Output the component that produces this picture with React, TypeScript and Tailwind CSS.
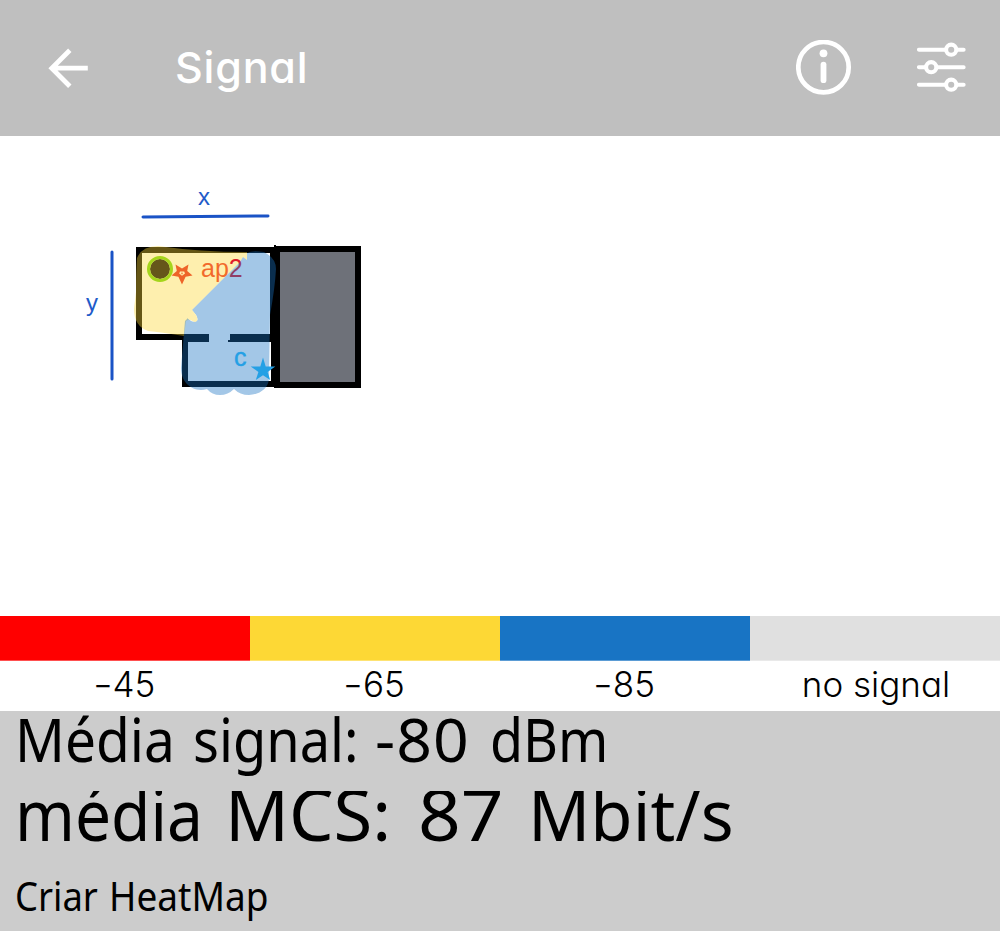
import React from "react";

const legend = [
  { sign: "-", label: "45", color: "bg-[#ff0000]", edge: "border-[#ff5050]" },
  { sign: "-", label: "65", color: "bg-[#fdd835]", edge: "border-[#fee373]" },
  { sign: "-", label: "85", color: "bg-[#1874c4]", edge: "border-[#5b9cd5]" },
  { sign: "", label: "no signal", color: "bg-[#e0e0e0]", edge: "border-[#e9e9e9]" },
];

function BackIcon() {
  return (
    <svg width="40" height="40" viewBox="0 0 40 40" fill="none" stroke="#fff" strokeWidth="4.8">
      <path d="M39.8 20.2H4M21.8 2.2L3.8 20.2L21.8 38.2" />
    </svg>
  );
}

function InfoIcon() {
  return (
    <svg width="56" height="56" viewBox="0 0 56 56" fill="none" stroke="#fff">
      <circle cx="27.5" cy="27.2" r="25.2" strokeWidth="4.7" />
      <circle cx="27.5" cy="13.3" r="3.9" fill="#fff" stroke="none" />
      <path d="M27.5 24.6V40.2" strokeWidth="5.8" strokeLinecap="round" />
    </svg>
  );
}

function SlidersIcon() {
  return (
    <svg width="50" height="52" viewBox="0 0 50 52" fill="#bfbfbf" stroke="#fff" strokeWidth="4.1" strokeLinecap="round">
      <path d="M2 7.7H46.6M2 25.2H46.6M2 42.7H46.6" />
      <circle cx="34.2" cy="7.7" r="5.1" />
      <circle cx="14.2" cy="25.2" r="5.1" />
      <circle cx="34.2" cy="42.7" r="5.1" />
    </svg>
  );
}

function FloorPlan() {
  return (
    <svg width="1000" height="480" viewBox="0 136 1000 480" className="block">
      <g stroke="#1a53c6" strokeWidth="3" strokeLinecap="round">
        <path d="M143 217L268 216" />
        <path d="M112 252V379" />
      </g>
      <g fill="#1f5bc9" fontFamily="Liberation Sans, sans-serif" fontSize="24">
        <text x="198" y="205">x</text>
        <text x="86" y="311">y</text>
      </g>

      <g shapeRendering="crispEdges">
        <path d="M136 247H274V245H276V246H361V388H274V387H182V340H136Z" fill="#000" />
        <path d="M142 253H270V334H142Z" fill="#fff" />
        <path d="M188 342H271V381H188Z" fill="#fff" />
        <path d="M209 333H230V340H228V343H209Z" fill="#fff" />
        <path d="M280 252H355V382H280Z" fill="#6e7179" />
      </g>

      <path
        d="M247 252Q200 252 158 246Q142 246 137 258Q136 272 136 292L134 309Q134 326 148 331Q160 332 184 336L186 321L190 319Q194 323 197 321Q198 319 192 310L240 262L243 257L247 260Z"
        fill="#fdd835"
        fillOpacity="0.4"
      />
      <text x="201" y="276.5" fill="#f26a2b" fontFamily="Liberation Sans, sans-serif" fontSize="25">
        ap<tspan fill="#e01c28">2</tspan>
      </text>
      <path
        d="M247 260V253Q252 250 264 252Q276 258 276 269Q275 288 270 315L269 378C269 389 258 395 249 395Q240 395 234 389Q228 395 220 395Q212 395 207 389C193 393 181 383 181 368L185 321L188 318Q192 323 196 321.5Q199 320 196 315L192 310L240 262L243 257Z"
        fill="#1874c4"
        fillOpacity="0.4"
      />
      <path d="M188 319C191 320 193 322 196 321.5Q199 320 196 315L192 310L188 313Z" fill="#ffefae" />
      <text x="234" y="365.5" fill="#24a0e5" stroke="#24a0e5" strokeWidth="0.4" fontFamily="Liberation Sans, sans-serif" fontSize="25">c</text>

      <circle cx="160" cy="269" r="10" fill="#65561a" />
      <circle cx="160" cy="269" r="11.5" fill="none" stroke="#a5d51b" strokeWidth="3" />
      <path
        d="M175.5 264.5L182 268.5L188.5 264.5L187.2 271L192.5 275.5L185.6 276.7L182 284.5L178.4 276.7L171.5 275.5L176.8 271Z"
        fill="#ee6428"
      />
      <path d="M180 271.6H184.2L185 273.5L182 275.7L179.2 273.5Z" fill="#ffefae" />
      <path d="M181 272.8H183L182 274.8Z" fill="#ee6428" />
      <path
        d="M263 357.5L265.7 366.4H275.3L267.6 372L270.2 380L263 375.2L255.8 380L258.4 372L250.7 366.4H260.3Z"
        fill="#24a0e5"
      />
    </svg>
  );
}

export default function App() {
  return (
    <div className="flex h-[931px] w-[1000px] flex-col overflow-hidden bg-white">
      <header className="flex h-[136px] shrink-0 items-center bg-[#bfbfbf] pr-[33px] pl-12 text-white">
        <BackIcon />
        <h1 className="ml-[87px] flex-1 pb-[3px] font-['Inter'] text-[43px] leading-[50px] font-medium tracking-[0.8px] whitespace-nowrap [font-feature-settings:'cv11']">
          Signal
        </h1>
        <div className="flex items-center gap-[65px]">
          <InfoIcon />
          <SlidersIcon />
        </div>
      </header>

      <main className="h-[480px] shrink-0">
        <FloorPlan />
      </main>

      <section className="grid h-[95px] shrink-0 grid-cols-4">
        {legend.map((item) => (
          <div key={item.label} className="flex flex-col">
            <div className={`h-[45px] border-b ${item.color} ${item.edge}`} />
            <div className="flex h-[50px] items-center justify-center pb-1 pl-0.5 font-['Inter'] text-[35px] leading-[42px] font-[350] whitespace-nowrap text-black [font-feature-settings:'cv11']">
              {item.sign && <span className="inline-block origin-right scale-x-125">{item.sign}</span>}
              <span>{item.label}</span>
            </div>
          </div>
        ))}
      </section>

      <footer className="flex flex-1 flex-col bg-[#cccccc] pl-[15px] font-['Noto_Sans'] whitespace-pre text-black">
        <p className="flex h-20 text-[59.5px] leading-[55px]">
          <span className="w-[178px] origin-left scale-x-[0.925]">Média </span>
          <span className="w-[182px] origin-left scale-x-[0.91]">signal: </span>
          <span className="w-[115px] origin-left scale-x-105 tracking-[1px]">-80 </span>
          <span className="origin-left scale-x-[0.905]">dBm</span>
        </p>
        <p className="flex h-[54px] overflow-hidden text-[72px] leading-[44px]">
          <span className="w-[210px] origin-left scale-x-[0.89]">média </span>
          <span className="w-[193px] origin-left scale-x-[0.98]">MCS: </span>
          <span className="w-[110px] origin-left scale-x-104">87 </span>
          <span className="origin-left scale-x-[0.955]">Mbit/s</span>
        </p>
        <p className="mt-8 flex text-[40px] leading-[38px]">
          <span className="w-[94px] origin-left scale-x-[0.91]">Criar </span>
          <span className="origin-left scale-x-[0.925]">HeatMap</span>
        </p>
      </footer>
    </div>
  );
}
